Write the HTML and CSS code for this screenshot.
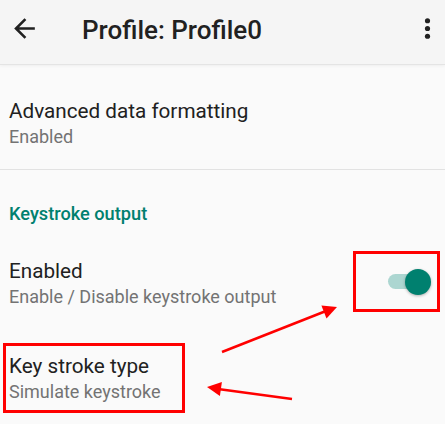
FILE: index.html
```html
<!DOCTYPE html>
<html lang="en">
<head>
<meta charset="utf-8">
<title>Profile: Profile0</title>
<link rel="stylesheet" href="styles.css">
</head>
<body>
<div class="screen">
  <header class="appbar">
    <svg class="icon icon--back" viewBox="0 0 24 24" aria-hidden="true"><path d="M20 11H7.83l5.59-5.59L12 4l-8 8 8 8 1.41-1.41L7.83 13H20v-2z"/></svg>
    <h1 class="appbar-title">Profile: Profile0</h1>
    <svg class="icon icon--more" viewBox="0 0 24 24" aria-hidden="true"><circle cx="12" cy="6" r="2"/><circle cx="12" cy="12" r="2"/><circle cx="12" cy="18" r="2"/></svg>
  </header>
  <main class="prefs">
    <div class="pref pref--first">
      <div class="pref-title">Advanced data formatting</div>
      <div class="pref-summary">Enabled</div>
    </div>
    <div class="divider"></div>
    <div class="category">Keystroke output</div>
    <div class="pref pref--switch">
      <div class="pref-text">
        <div class="pref-title">Enabled</div>
        <div class="pref-summary">Enable / Disable keystroke output</div>
      </div>
      <div class="switch"><span class="switch-track"></span><span class="switch-thumb"></span></div>
    </div>
    <div class="pref pref--last">
      <div class="pref-title">Key stroke type</div>
      <div class="pref-summary">Simulate keystroke</div>
    </div>
  </main>
  <div class="mark mark--switch"></div>
  <div class="mark mark--type"></div>
  <svg class="arrows" viewBox="0 0 445 424" aria-hidden="true">
    <line x1="222" y1="352" x2="326" y2="311" class="arrow-line"/>
    <polygon points="337,307 326.5,318.6 321.4,305.6" class="arrow-head"/>
    <line x1="292" y1="399" x2="218" y2="389" class="arrow-line"/>
    <polygon points="207,387 221.9,382.1 219.9,395.9" class="arrow-head"/>
  </svg>
</div>
</body>
</html>
```
FILE: styles.css
```css
html, body {
  margin: 0;
  padding: 0;
}
body {
  background: #fafafa;
  font-family: Roboto, "Noto Sans", "Liberation Sans", sans-serif;
  width: 445px;
  height: 424px;
  overflow: hidden;
}
.screen {
  position: relative;
  width: 445px;
  height: 424px;
  background: #fafafa;
}
.appbar {
  box-sizing: border-box;
  height: 64px;
  padding-bottom: 8px;
  display: flex;
  align-items: center;
  background: #f5f5f5;
  box-shadow: 0 1px 0 #e4e4e4, 0 2px 3px rgba(0, 0, 0, 0.05);
  position: relative;
  z-index: 1;
}
.icon {
  width: 31px;
  height: 31px;
  fill: #212121;
  flex: none;
}
.icon--back {
  margin-left: 9px;
}
.appbar-title {
  margin: 3px 0 0 42px;
  font-size: 26px;
  line-height: 30px;
  font-weight: 500;
  color: #212121;
  flex: 1;
}
.icon--more {
  margin-right: 2px;
}
.prefs {
  display: flex;
  flex-direction: column;
}
.pref {
  padding: 0 9px;
}
.pref-title {
  font-size: 20.7px;
  line-height: 24px;
  color: #212121;
}
.pref-summary {
  margin-top: 2px;
  font-size: 18px;
  line-height: 23px;
  color: #737373;
}
.pref--first {
  padding-top: 35.2px;
  padding-bottom: 20.8px;
}
.divider {
  height: 1px;
  background: #e2e2e2;
}
.category {
  padding: 33px 9px 0;
  font-size: 18.2px;
  line-height: 22px;
  font-weight: 500;
  color: #00806f;
}
.pref--switch {
  padding-top: 34.2px;
  padding-right: 14px;
  display: flex;
  align-items: flex-start;
  justify-content: space-between;
}
.switch {
  position: relative;
  width: 43px;
  height: 26px;
  margin-top: 9.8px;
  flex: none;
}
.switch-track {
  position: absolute;
  left: 0;
  top: 5.5px;
  width: 37.5px;
  height: 15px;
  border-radius: 7.5px;
  background: #acd6d1;
}
.switch-thumb {
  position: absolute;
  right: 0;
  top: 0;
  width: 26px;
  height: 26px;
  border-radius: 50%;
  background: #00806f;
  box-shadow: 0 1px 3px rgba(0, 0, 0, 0.3);
}
.pref--last {
  padding-top: 45.4px;
}
.mark {
  position: absolute;
  box-sizing: border-box;
  border: 3px solid #ff0000;
}
.mark--switch {
  left: 353px;
  top: 251px;
  width: 87px;
  height: 61px;
}
.mark--type {
  left: 3px;
  top: 343px;
  width: 182px;
  height: 70px;
}
.arrows {
  position: absolute;
  left: 0;
  top: 0;
  width: 445px;
  height: 424px;
}
.arrow-line {
  stroke: #ff0000;
  stroke-width: 2.5;
}
.arrow-head {
  fill: #ff0000;
}
```
